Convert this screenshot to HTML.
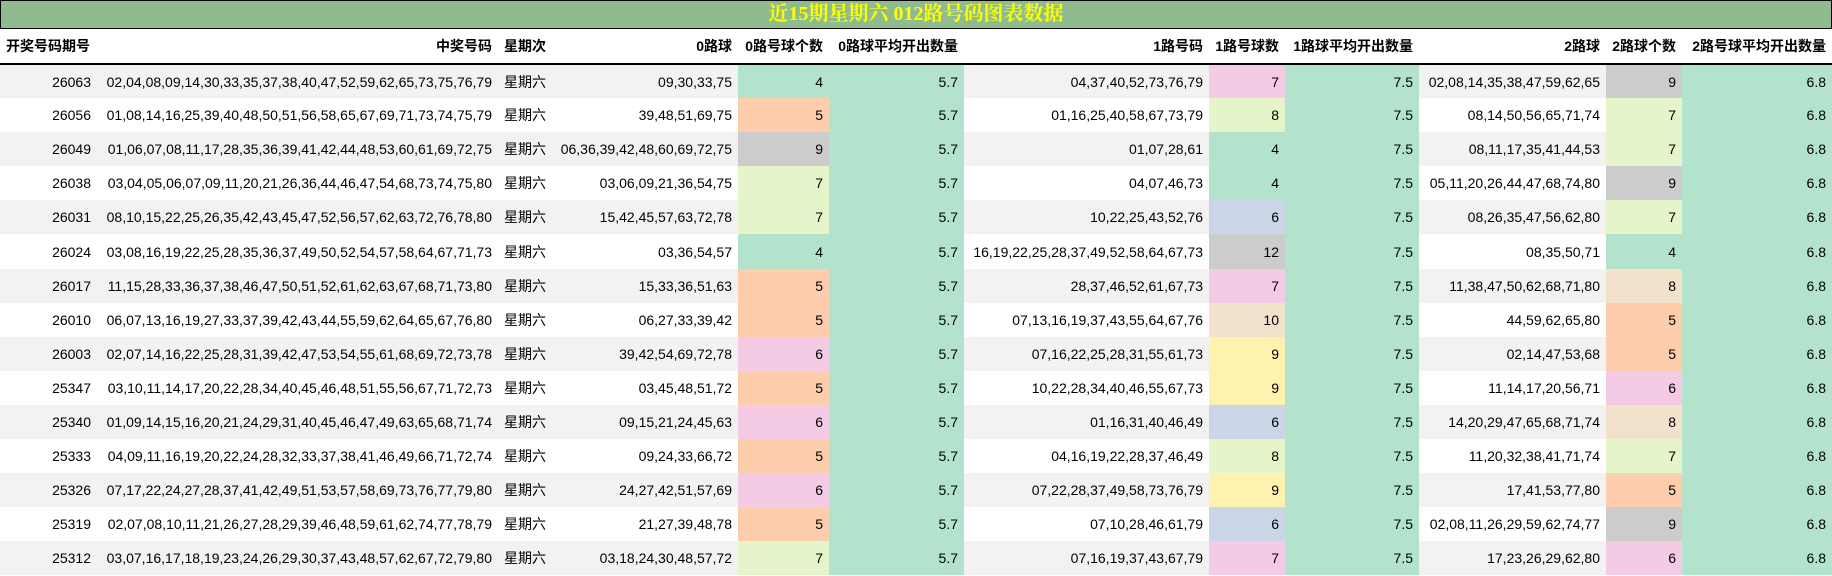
<!DOCTYPE html>
<html><head><meta charset="utf-8"><style>
*{margin:0;padding:0;box-sizing:border-box}
body{width:1832px;height:576px;background:#fff;overflow:hidden;font-family:"Liberation Sans","Noto Sans CJK SC",sans-serif;font-size:14px;color:#000}
.title{height:29px;background:#8fbc8f;border:1px solid #000;text-align:center;color:#ffff00;font-family:"Liberation Serif","Noto Serif CJK SC",serif;font-weight:bold;font-size:20px;line-height:27px}
table{border-collapse:collapse;table-layout:fixed;width:1832px}
td,th{padding:0 6px;white-space:nowrap;overflow:hidden}
th{height:35px;font-weight:bold;text-align:right;border-bottom:2px solid #000}
td{height:34.1px;text-align:right}
tr.g td{background:#f2f2f2}
.l{text-align:left}
td.a{background:#b3e2cd!important}
.c4{background:#b3e2cd!important}.c5{background:#fdcdac!important}.c6{background:#f4cae4!important}.c7{background:#e6f5c9!important}.cg{background:#cccccc!important}.cb{background:#cbd5e8!important}.cy{background:#fff2ae!important}.ce{background:#f1e2cc!important}
</style></head><body>
<div class="title">近15期星期六 012路号码图表数据</div>
<table>
<colgroup><col style="width:97px"><col style="width:401px"><col style="width:51px"><col style="width:189px"><col style="width:91px"><col style="width:135px"><col style="width:245px"><col style="width:76px"><col style="width:134px"><col style="width:187px"><col style="width:76px"><col style="width:150px"></colgroup>
<tr><th class="l">开奖号码期号</th><th>中奖号码</th><th class="l">星期次</th><th>0路球</th><th>0路号球个数</th><th>0路球平均开出数量</th><th>1路号码</th><th>1路号球数</th><th>1路球平均开出数量</th><th>2路球</th><th>2路球个数</th><th>2路号球平均开出数量</th></tr>
<tr class="g"><td>26063</td><td>02,04,08,09,14,30,33,35,37,38,40,47,52,59,62,65,73,75,76,79</td><td class="l">星期六</td><td>09,30,33,75</td><td class="c4">4</td><td class="a">5.7</td><td>04,37,40,52,73,76,79</td><td class="c6">7</td><td class="a">7.5</td><td>02,08,14,35,38,47,59,62,65</td><td class="cg">9</td><td class="a">6.8</td></tr>
<tr><td>26056</td><td>01,08,14,16,25,39,40,48,50,51,56,58,65,67,69,71,73,74,75,79</td><td class="l">星期六</td><td>39,48,51,69,75</td><td class="c5">5</td><td class="a">5.7</td><td>01,16,25,40,58,67,73,79</td><td class="c7">8</td><td class="a">7.5</td><td>08,14,50,56,65,71,74</td><td class="c7">7</td><td class="a">6.8</td></tr>
<tr class="g"><td>26049</td><td>01,06,07,08,11,17,28,35,36,39,41,42,44,48,53,60,61,69,72,75</td><td class="l">星期六</td><td>06,36,39,42,48,60,69,72,75</td><td class="cg">9</td><td class="a">5.7</td><td>01,07,28,61</td><td class="c4">4</td><td class="a">7.5</td><td>08,11,17,35,41,44,53</td><td class="c7">7</td><td class="a">6.8</td></tr>
<tr><td>26038</td><td>03,04,05,06,07,09,11,20,21,26,36,44,46,47,54,68,73,74,75,80</td><td class="l">星期六</td><td>03,06,09,21,36,54,75</td><td class="c7">7</td><td class="a">5.7</td><td>04,07,46,73</td><td class="c4">4</td><td class="a">7.5</td><td>05,11,20,26,44,47,68,74,80</td><td class="cg">9</td><td class="a">6.8</td></tr>
<tr class="g"><td>26031</td><td>08,10,15,22,25,26,35,42,43,45,47,52,56,57,62,63,72,76,78,80</td><td class="l">星期六</td><td>15,42,45,57,63,72,78</td><td class="c7">7</td><td class="a">5.7</td><td>10,22,25,43,52,76</td><td class="cb">6</td><td class="a">7.5</td><td>08,26,35,47,56,62,80</td><td class="c7">7</td><td class="a">6.8</td></tr>
<tr><td>26024</td><td>03,08,16,19,22,25,28,35,36,37,49,50,52,54,57,58,64,67,71,73</td><td class="l">星期六</td><td>03,36,54,57</td><td class="c4">4</td><td class="a">5.7</td><td>16,19,22,25,28,37,49,52,58,64,67,73</td><td class="cg">12</td><td class="a">7.5</td><td>08,35,50,71</td><td class="c4">4</td><td class="a">6.8</td></tr>
<tr class="g"><td>26017</td><td>11,15,28,33,36,37,38,46,47,50,51,52,61,62,63,67,68,71,73,80</td><td class="l">星期六</td><td>15,33,36,51,63</td><td class="c5">5</td><td class="a">5.7</td><td>28,37,46,52,61,67,73</td><td class="c6">7</td><td class="a">7.5</td><td>11,38,47,50,62,68,71,80</td><td class="ce">8</td><td class="a">6.8</td></tr>
<tr><td>26010</td><td>06,07,13,16,19,27,33,37,39,42,43,44,55,59,62,64,65,67,76,80</td><td class="l">星期六</td><td>06,27,33,39,42</td><td class="c5">5</td><td class="a">5.7</td><td>07,13,16,19,37,43,55,64,67,76</td><td class="ce">10</td><td class="a">7.5</td><td>44,59,62,65,80</td><td class="c5">5</td><td class="a">6.8</td></tr>
<tr class="g"><td>26003</td><td>02,07,14,16,22,25,28,31,39,42,47,53,54,55,61,68,69,72,73,78</td><td class="l">星期六</td><td>39,42,54,69,72,78</td><td class="c6">6</td><td class="a">5.7</td><td>07,16,22,25,28,31,55,61,73</td><td class="cy">9</td><td class="a">7.5</td><td>02,14,47,53,68</td><td class="c5">5</td><td class="a">6.8</td></tr>
<tr><td>25347</td><td>03,10,11,14,17,20,22,28,34,40,45,46,48,51,55,56,67,71,72,73</td><td class="l">星期六</td><td>03,45,48,51,72</td><td class="c5">5</td><td class="a">5.7</td><td>10,22,28,34,40,46,55,67,73</td><td class="cy">9</td><td class="a">7.5</td><td>11,14,17,20,56,71</td><td class="c6">6</td><td class="a">6.8</td></tr>
<tr class="g"><td>25340</td><td>01,09,14,15,16,20,21,24,29,31,40,45,46,47,49,63,65,68,71,74</td><td class="l">星期六</td><td>09,15,21,24,45,63</td><td class="c6">6</td><td class="a">5.7</td><td>01,16,31,40,46,49</td><td class="cb">6</td><td class="a">7.5</td><td>14,20,29,47,65,68,71,74</td><td class="ce">8</td><td class="a">6.8</td></tr>
<tr><td>25333</td><td>04,09,11,16,19,20,22,24,28,32,33,37,38,41,46,49,66,71,72,74</td><td class="l">星期六</td><td>09,24,33,66,72</td><td class="c5">5</td><td class="a">5.7</td><td>04,16,19,22,28,37,46,49</td><td class="c7">8</td><td class="a">7.5</td><td>11,20,32,38,41,71,74</td><td class="c7">7</td><td class="a">6.8</td></tr>
<tr class="g"><td>25326</td><td>07,17,22,24,27,28,37,41,42,49,51,53,57,58,69,73,76,77,79,80</td><td class="l">星期六</td><td>24,27,42,51,57,69</td><td class="c6">6</td><td class="a">5.7</td><td>07,22,28,37,49,58,73,76,79</td><td class="cy">9</td><td class="a">7.5</td><td>17,41,53,77,80</td><td class="c5">5</td><td class="a">6.8</td></tr>
<tr><td>25319</td><td>02,07,08,10,11,21,26,27,28,29,39,46,48,59,61,62,74,77,78,79</td><td class="l">星期六</td><td>21,27,39,48,78</td><td class="c5">5</td><td class="a">5.7</td><td>07,10,28,46,61,79</td><td class="cb">6</td><td class="a">7.5</td><td>02,08,11,26,29,59,62,74,77</td><td class="cg">9</td><td class="a">6.8</td></tr>
<tr class="g"><td>25312</td><td>03,07,16,17,18,19,23,24,26,29,30,37,43,48,57,62,67,72,79,80</td><td class="l">星期六</td><td>03,18,24,30,48,57,72</td><td class="c7">7</td><td class="a">5.7</td><td>07,16,19,37,43,67,79</td><td class="c6">7</td><td class="a">7.5</td><td>17,23,26,29,62,80</td><td class="c6">6</td><td class="a">6.8</td></tr>
</table>
</body></html>
